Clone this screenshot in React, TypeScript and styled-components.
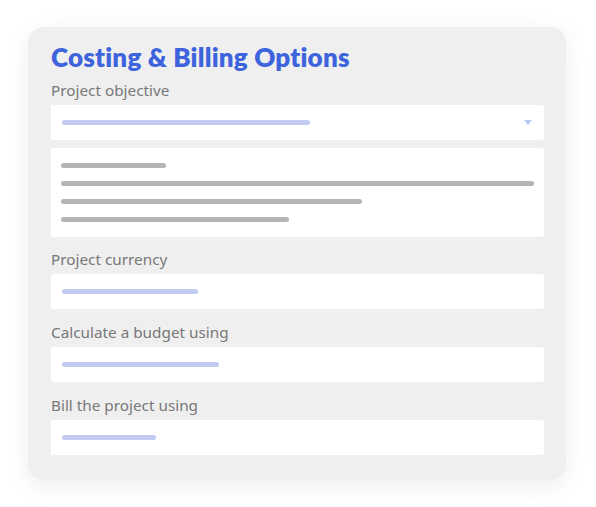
import { FC } from 'react';
import styled, { createGlobalStyle } from 'styled-components';

const GlobalStyle = createGlobalStyle`
  html, body {
    margin: 0;
    padding: 0;
    background: #ffffff;
  }
`;

const Page = styled.div`
  width: 596px;
  height: 507px;
  padding: 27px 30px 0 28px;
  box-sizing: border-box;
`;

const Card = styled.div`
  width: 538px;
  box-sizing: border-box;
  padding: 9px 22px 25px 23px;
  background: #efefef;
  border-radius: 16px;
  box-shadow: 0 6px 24px rgba(0, 0, 0, 0.07);
  display: flex;
  flex-direction: column;
`;

const Title = styled.h1`
  margin: 0;
  font-family: Lato, 'Noto Sans', sans-serif;
  font-weight: 800;
  font-size: 26px;
  line-height: 43px;
  color: #3d63dd;
  letter-spacing: 0.2px;
`;

const Label = styled.div<{ gap: number }>`
  margin-top: ${(p) => p.gap}px;
  margin-bottom: 4px;
  font-family: 'Noto Sans', 'Open Sans', sans-serif;
  font-size: 15.3px;
  line-height: 22px;
  color: #787878;
`;

const Field = styled.div`
  position: relative;
  height: 35px;
  background: #ffffff;
  border-radius: 2px;
  display: flex;
  align-items: center;
  padding: 0 11px;
`;

const TextBox = styled.div`
  margin-top: 8px;
  height: 89px;
  box-sizing: border-box;
  background: #ffffff;
  border-radius: 2px;
  padding: 15px 10px 0 10px;
  display: flex;
  flex-direction: column;
  gap: 13px;
`;

const Bar = styled.div<{ w: number; tone: 'blue' | 'grey' }>`
  width: ${(p) => p.w}px;
  height: 5px;
  border-radius: 3px;
  background: ${(p) => (p.tone === 'blue' ? '#c1cbf1' : '#b4b5b7')};
`;

const Caret = styled.div`
  position: absolute;
  right: 12px;
  top: 15px;
  width: 0;
  height: 0;
  border-left: 4px solid transparent;
  border-right: 4px solid transparent;
  border-top: 5px solid #bac6ef;
`;

const lines = [105, 473, 301, 228];

const App: FC = () => (
  <Page>
    <GlobalStyle />
    <Card>
      <Title>Costing &amp; Billing Options</Title>
      <Label gap={0}>Project objective</Label>
      <Field>
        <Bar w={248} tone="blue" />
        <Caret />
      </Field>
      <TextBox>
        {lines.map((w, i) => (
          <Bar key={i} w={w} tone="grey" />
        ))}
      </TextBox>
      <Label gap={11}>Project currency</Label>
      <Field>
        <Bar w={136} tone="blue" />
      </Field>
      <Label gap={12}>Calculate a budget using</Label>
      <Field>
        <Bar w={157} tone="blue" />
      </Field>
      <Label gap={12}>Bill the project using</Label>
      <Field>
        <Bar w={94} tone="blue" />
      </Field>
    </Card>
  </Page>
);

export default App;
